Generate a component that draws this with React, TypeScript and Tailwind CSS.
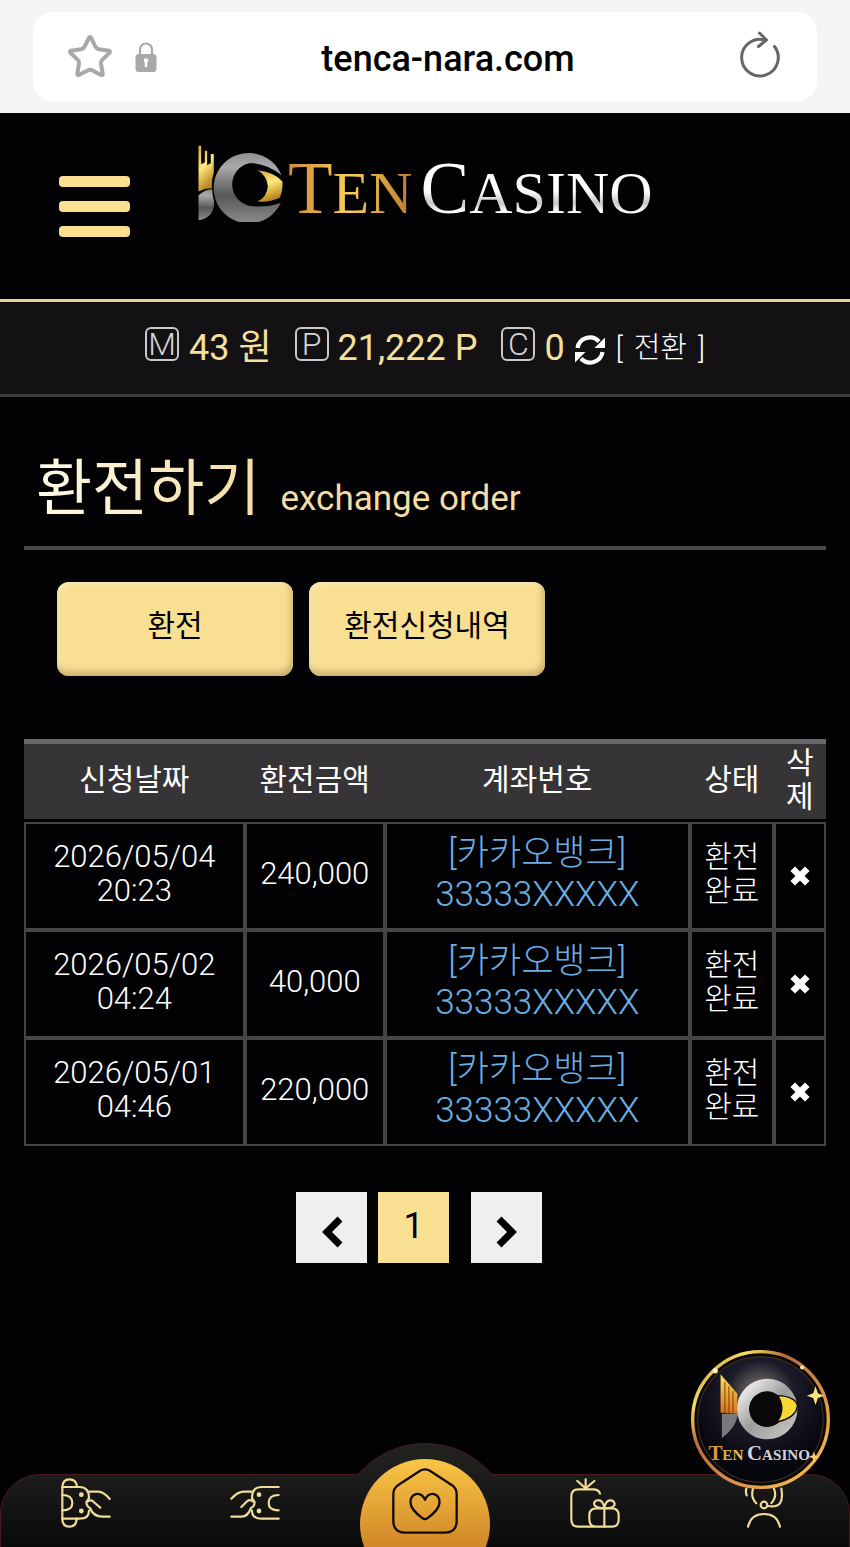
import { Star } from 'lucide-react';
import type { ReactNode } from 'react';

type Order = {
    date: string;
    time: string;
    amount: string;
    bank: string;
    account: string;
};

const orders: Order[] = [
    { date: '2026/05/04', time: '20:23', amount: '240,000', bank: '[카카오뱅크]', account: '33333XXXXX' },
    { date: '2026/05/02', time: '04:24', amount: '40,000', bank: '[카카오뱅크]', account: '33333XXXXX' },
    { date: '2026/05/01', time: '04:46', amount: '220,000', bank: '[카카오뱅크]', account: '33333XXXXX' },
];

const LockIcon = () => (
    <svg viewBox="0 0 22 30" className="h-[30px] w-[22px]" aria-hidden="true">
        <path d="M5 13V7.500a6 6 0 0 1 12 0v5.500" fill="none" stroke="#a8a8a8" strokeWidth="2.2" />
        <rect x="0.5" y="12" width="21" height="18" rx="3.5" fill="#a8a8a8" />
        <circle cx="11" cy="18.5" r="2.3" fill="#fff" />
        <path d="M11 19v6" stroke="#fff" strokeWidth="2.4" />
    </svg>
);

const ReloadIcon = () => (
    <svg viewBox="0 0 42 48" className="mb-[6px] h-12 w-[42px]" fill="none" stroke="#666" strokeWidth="3" strokeLinecap="round" strokeLinejoin="round" aria-hidden="true">
        <path d="M35.5 16.5A18.3 18.3 0 1 1 26 10" />
        <path d="M20.5 3l7 7-8 6.500" />
    </svg>
);

const RefreshIcon = () => (
    <svg viewBox="0 0 32 32" className="mt-1 h-8 w-8" aria-hidden="true">
        <g fill="none" stroke="#fff" strokeWidth="4.200">
            <path d="M3.500 14A12.500 12.500 0 0 1 25 7.500" />
            <path d="M28.500 18A12.500 12.500 0 0 1 7 24.500" />
        </g>
        <path d="M31 3.500V14H20.500Z" fill="#fff" />
        <path d="M1 28.500V18H11.500Z" fill="#fff" />
    </svg>
);

const LogoMark = () => (
    <svg viewBox="55 48 255 232" className="h-[77px] w-[85px]" aria-hidden="true">
        <defs>
            <linearGradient id="mark-gold" x1="0" y1="0" x2="0.3" y2="1">
                <stop offset="0" stopColor="#d9a93c" />
                <stop offset="0.5" stopColor="#ffe77a" />
                <stop offset="1" stopColor="#b98520" />
            </linearGradient>
            <linearGradient id="mark-gray" x1="0" y1="0" x2="0" y2="1">
                <stop offset="0" stopColor="#909093" />
                <stop offset="0.2" stopColor="#a9a9ab" />
                <stop offset="0.6" stopColor="#57575a" />
                <stop offset="1" stopColor="#8b8b8e" />
            </linearGradient>
        </defs>
        <path d="M56 50H64V106L75 100V65H82V109L93 102V75H102V130Q95 152 96 178Q75 178 56 188Z" fill="url(#mark-gold)" />
        <path d="M56 275V200Q72 182 97 181Q98 204 103 218Q104 248 86 263Q73 274 56 275Z" fill="url(#mark-gray)" />
        <path d="M306 139A106 106 0 1 0 304 222Q260 238 212 232A66 66 0 0 1 212 102Q262 104 306 139Z" fill="url(#mark-gray)" />
        <path d="M234 124Q285 130 309 158Q310 190 300 208Q265 222 234 218Q262 205 265 172Q262 140 234 124Z" fill="url(#mark-gold)" />
    </svg>
);

const Logo = () => (
    <a href="#" aria-label="Ten Casino" className="flex items-start">
        <LogoMark />
        <span className="mt-[6px] ml-[5px] flex items-baseline font-['Liberation_Serif',serif] text-[60px] leading-[76px] whitespace-nowrap text-transparent">
            <span className="bg-linear-to-r from-[#cf8b35] via-[#f7cf58] to-[#b8792c] bg-clip-text">
                <span className="text-[73px]">T</span>EN
            </span>
            <span className="ml-2 bg-linear-to-b from-white from-50% via-[#c8c8ca] via-65% to-white to-75% bg-clip-text">
                <span className="text-[73px]">C</span>ASINO
            </span>
        </span>
    </a>
);

const BoxedLetter = ({ children }: { children: ReactNode }) => (
    <span className="mb-2 flex h-[34px] w-[34px] items-center justify-center rounded-md border-2 border-[#c9c9c9] text-[32px] leading-none font-light text-[#d6d6d6]">
        {children}
    </span>
);

const Chevron = ({ d }: { d: string }) => (
    <svg viewBox="0 0 24 32" className="mt-2 h-8 w-6" fill="none" stroke="#000" strokeWidth="7" aria-hidden="true">
        <path d={d} />
    </svg>
);

const Floater = () => (
    <a href="#" aria-label="Ten Casino" className="absolute right-5 bottom-[58px] z-20">
        <svg viewBox="0 0 414 414" className="h-[139px] w-[139px]">
            <defs>
                <linearGradient id="ring" x1="0" y1="0" x2="1" y2="1">
                    <stop offset="0" stopColor="#b9662c" />
                    <stop offset="0.2" stopColor="#f5df62" />
                    <stop offset="0.35" stopColor="#b86b3c" />
                    <stop offset="0.6" stopColor="#d68b4d" />
                    <stop offset="0.85" stopColor="#f0b548" />
                    <stop offset="1" stopColor="#a85a26" />
                </linearGradient>
                <radialGradient id="night" cx="0.5" cy="0.3" r="0.6">
                    <stop offset="0" stopColor="#8a8478" />
                    <stop offset="0.45" stopColor="#1b1a28" />
                    <stop offset="1" stopColor="#06060d" />
                </radialGradient>
                <linearGradient id="steel" x1="0" y1="0" x2="1" y2="1">
                    <stop offset="0" stopColor="#f2f2f2" />
                    <stop offset="0.5" stopColor="#9d9d9d" />
                    <stop offset="1" stopColor="#c2c2be" />
                </linearGradient>
                <linearGradient id="flame" x1="0" y1="0" x2="0" y2="1">
                    <stop offset="0" stopColor="#ffe35a" />
                    <stop offset="1" stopColor="#d9701c" />
                </linearGradient>
                <linearGradient id="gold-word" x1="0" y1="0" x2="1" y2="0">
                    <stop offset="0" stopColor="#d98a35" />
                    <stop offset="1" stopColor="#f0cf4c" />
                </linearGradient>
            </defs>
            <circle cx="207" cy="207" r="202" fill="#0a0808" stroke="url(#ring)" strokeWidth="10" />
            <circle cx="207" cy="207" r="187" fill="url(#night)" stroke="#4a3023" strokeWidth="3" />
            <path d="M88 72L138 130V190L88 186Z" fill="url(#flame)" />
            <path d="M101 95V188M113 108V188M125 122V188" stroke="#7a3f12" strokeWidth="3" />
            <path d="M92 190H140Q134 232 92 262Z" fill="#77797a" />
            <circle cx="227" cy="176" r="71" fill="none" stroke="url(#steel)" strokeWidth="38" />
            <circle cx="226" cy="176" r="53" fill="#0b0908" />
            <path d="M258 136Q310 138 317 165Q314 202 256 214Q284 176 258 136Z" fill="#f8d839" stroke="#0b0908" strokeWidth="4" />
            <path d="M371 108l7 21 19 7-19 7-7 21-7-21-19-7 19-7Z" fill="#ffe27a" />
            <circle cx="72" cy="62" r="8" fill="#fff3b8" />
            <circle cx="331" cy="52" r="6" fill="#fff3b8" />
            <path d="M366 302l4 12 12 4-12 4-4 12-4-12-12-4 12-4Z" fill="#ffd070" />
            <g fontFamily="Liberation Serif, serif" fontWeight="700">
                <text x="52" y="327" fontSize="62" fill="url(#gold-word)">
                    T<tspan fontSize="45">EN</tspan>
                </text>
                <text x="167" y="327" fontSize="62" fill="#d4d4da">
                    C<tspan fontSize="45">ASINO</tspan>
                </text>
            </g>
        </svg>
    </a>
);

const NavIcon = ({ children }: { children: ReactNode }) => (
    <svg viewBox="0 0 150 150" className="h-[50px] w-[50px]" fill="none" stroke="#f0dc98" strokeWidth="6.500" strokeLinecap="round" strokeLinejoin="round" aria-hidden="true">
        {children}
    </svg>
);

const navItems = [
    {
        label: '입금',
        icon: (
            <NavIcon>
                <path d="M4 27V125Q5 146 25 146Q46 146 47 122M4 27Q5 4 25 4Q46 4 48 26" />
                <path d="M4 27H55Q84 27 84 60M4 122H55Q84 122 84 98M4 51Q34 51 34 75Q34 97 4 97" />
                <path d="M84 41H112Q128 41 146 63M84 60L76 72Q76 85 87 90Q97 116 125 116H146M78 72Q90 62 98 72L118 89" />
                <circle cx="61" cy="50" r="4" fill="#f0dc98" />
                <circle cx="61" cy="99" r="4" fill="#f0dc98" />
            </NavIcon>
        ),
    },
    {
        label: '출금',
        icon: (
            <NavIcon>
                <path d="M146 27H95Q66 27 66 60M146 122H95Q66 122 66 98M146 51Q116 51 116 75Q116 97 146 97" />
                <path d="M66 41H40Q24 41 4 62M66 60L74 72Q74 85 63 90Q53 116 35 116H4M72 72Q60 62 52 69L34 87" />
                <circle cx="87" cy="50" r="4" fill="#f0dc98" />
                <circle cx="87" cy="99" r="4" fill="#f0dc98" />
            </NavIcon>
        ),
    },
    { label: '홈', icon: null },
    {
        label: '이벤트',
        icon: (
            <NavIcon>
                <path d="M47 4V31M22 9L47 31L73 9M90 47Q86 34 70 34H25Q4 34 4 55V125Q4 146 25 146H125Q146 146 146 125V112Q146 91 125 91H80Q58 91 58 112V125Q58 146 80 146" />
                <path d="M103 91V146M103 91Q71 89 72 76Q75 65 88 67Q100 69 103 91Q106 69 119 67Q132 66 134 78Q134 91 103 91" />
            </NavIcon>
        ),
    },
    {
        label: '고객센터',
        icon: (
            <NavIcon>
                <path d="M22 32Q19 42 23 52M42 32Q34 58 52 76M105 32Q115 57 97 75M127 32Q132 62 124 74Q116 88 86 84" />
                <circle cx="75" cy="81" r="10" />
                <path d="M27 146Q36 108 75 108Q114 108 123 146" />
            </NavIcon>
        ),
    },
];

const BottomNav = () => (
    <footer className="relative h-[104px] overflow-hidden pt-[31px]">
        <nav className="grid h-[120px] grid-cols-5 rounded-t-[40px] border border-[#4a1c20] bg-linear-to-b from-[#1c1c1c] to-[#0a0a0a] to-60%">
            {navItems.map((item) =>
                item.icon ? (
                    <a key={item.label} href="#" aria-label={item.label} className="flex justify-center pt-[3px]">
                        {item.icon}
                    </a>
                ) : (
                    <span key={item.label} />
                ),
            )}
        </nav>
        {/* Raised home button, its arch shows only above the bar */}
        <div className="absolute inset-x-0 top-0 flex h-8 justify-center overflow-hidden">
            <div className="h-[176px] w-[176px] shrink-0 rounded-full border border-[#4a1c20] bg-linear-to-b from-[#222220] to-[#1c1c1c] to-20%" />
        </div>
        <div className="absolute inset-x-0 top-4 flex justify-center">
            <a href="#" aria-label="홈" className="flex h-[130px] w-[130px] justify-center rounded-full bg-linear-to-b from-[#f9c646] to-[#cf8526] to-70% pt-[9px]">
                <svg viewBox="0 0 200 200" className="h-[66px] w-[66px]" fill="none" stroke="#120a04" strokeWidth="7" strokeLinejoin="round" aria-hidden="true">
                    <path d="M84 9Q100-1 116 9L182 52Q196 62 196 80V160Q196 196 160 196H40Q4 196 4 160V80Q4 62 18 52Z" />
                    <path d="M100 96Q90 76 73 79Q55 84 56 105Q57 126 92 152Q100 158 108 152Q143 126 144 105Q145 84 127 79Q110 76 100 96Z" />
                </svg>
            </a>
        </div>
    </footer>
);

export default function App() {
    return (
        <div className="relative flex min-h-screen flex-col bg-[#020103] font-[Roboto,'Noto_Sans_CJK_KR',sans-serif] text-white">
            {/* Address bar */}
            <div className="bg-[#f5f5f5] px-[33px] py-3">
                <div className="flex h-[89px] items-center rounded-[20px] bg-white pr-9 pl-[33px]">
                    <button type="button" aria-label="즐겨찾기">
                        <Star className="h-12 w-12 text-[#a8a8a8]" strokeWidth={2} />
                    </button>
                    <span className="ml-[21px]">
                        <LockIcon />
                    </span>
                    <span className="flex-1 pt-1 text-center text-[36px] leading-none font-medium text-black">tenca-nara.com</span>
                    <button type="button" aria-label="새로고침">
                        <ReloadIcon />
                    </button>
                </div>
            </div>

            <header className="flex h-[189px] items-start border-b-[3px] border-[#e3d39a] pt-8">
                <button type="button" aria-label="메뉴" className="mt-[31px] ml-[59px] flex w-[71px] flex-col gap-[14px]">
                    <span className="h-[11px] rounded-sm bg-[#fbe08f]" />
                    <span className="h-[11px] rounded-sm bg-[#fbe08f]" />
                    <span className="h-[11px] rounded-sm bg-[#fbe08f]" />
                </button>
                <div className="ml-[68px]">
                    <Logo />
                </div>
            </header>

            {/* Balances */}
            <div className="flex h-[95px] items-center justify-center border-b-[3px] border-[#3c3a3d] bg-[#131113] text-[36px] leading-none text-[#f4e09c]">
                <BoxedLetter>M</BoxedLetter>
                <span className="mr-[23px] ml-[10px]">43 원</span>
                <BoxedLetter>P</BoxedLetter>
                <span className="mr-6 ml-[9px]">21,222 P</span>
                <BoxedLetter>C</BoxedLetter>
                <span className="mr-[9px] ml-[9px]">0</span>
                <button type="button" className="flex items-center gap-[10px] text-[29px] font-light text-white">
                    <RefreshIcon />
                    <span className="flex gap-[11px]">
                        <span>[</span>
                        <span>전환</span>
                        <span>]</span>
                    </span>
                </button>
            </div>

            <main className="flex-1 px-6 pt-[50px]">
                <h1 className="flex items-baseline gap-5 border-b-4 border-[#49474a] pb-[5px] pl-3 leading-[84px]">
                    <span className="bg-linear-to-r from-[#fffbe8] to-[#f5dca0] bg-clip-text text-[61px] text-transparent">환전하기</span>
                    <span className="text-[35px] text-[#f3dda3]">exchange order</span>
                </h1>

                <div className="mt-8 flex gap-4 pl-[33px] text-[30px] text-black">
                    <button type="button" className="h-[94px] w-[236px] rounded-xl bg-[#f9df92] pb-2 shadow-[inset_-2px_-4px_7px_#c4ab6d,inset_2px_2px_5px_#fff0c0]">
                        환전
                    </button>
                    <button type="button" className="h-[94px] w-[236px] rounded-xl bg-[#f9df92] pb-2 shadow-[inset_-2px_-4px_7px_#c4ab6d,inset_2px_2px_5px_#fff0c0]">
                        환전신청내역
                    </button>
                </div>

                <table className="mt-[63px] w-full table-fixed border-separate border-spacing-0 text-center text-[30px] leading-[34px]">
                    <colgroup>
                        <col className="w-[27.5%]" />
                        <col className="w-[17.5%]" />
                        <col className="w-[38%]" />
                        <col className="w-[10.500%]" />
                        <col />
                    </colgroup>
                    <thead>
                        <tr className="h-[83px]">
                            {['신청날짜', '환전금액', '계좌번호', '상태', '삭제'].map((name) => (
                                <th key={name} scope="col" className="border-t-[5px] border-b-[3px] border-t-[#69676a] border-b-[#020103] bg-[#363437] px-2 pb-1 font-normal break-all">
                                    {name}
                                </th>
                            ))}
                        </tr>
                    </thead>
                    <tbody className="font-light">
                        {orders.map((order) => (
                            <tr key={order.date} className="h-[108px]">
                                <td className="border-2 border-[#464447] pb-1 text-[31px]">
                                    {order.date}
                                    <br />
                                    {order.time}
                                </td>
                                <td className="border-2 border-[#464447] pb-1 text-[31px]">{order.amount}</td>
                                <td className="border-2 border-[#464447] pb-1 text-[35px] leading-[41px]">
                                    <a href="#" className="text-[#68b0e4]">
                                        {order.bank}
                                        <br />
                                        {order.account}
                                    </a>
                                </td>
                                <td className="border-2 border-[#464447] pb-1">
                                    환전
                                    <br />
                                    완료
                                </td>
                                <td className="border-2 border-[#464447]">
                                    <button type="button" aria-label="삭제" className="block w-full">
                                        <svg viewBox="0 0 20 20" className="mx-auto h-5 w-5" stroke="#fff" strokeWidth="6.500" strokeLinecap="square" aria-hidden="true">
                                            <path d="M5 5L15 15M15 5L5 15" />
                                        </svg>
                                    </button>
                                </td>
                            </tr>
                        ))}
                    </tbody>
                </table>

                <div className="mt-[46px] flex justify-center pr-3 text-[36px] text-black">
                    <button type="button" aria-label="이전" className="flex h-[71px] w-[71px] items-center justify-center bg-[#f0eef0]">
                        <Chevron d="M20 3L7 16L20 29" />
                    </button>
                    <button type="button" aria-current="page" className="mr-[22px] ml-[11px] h-[71px] w-[71px] bg-[#f9df92] pb-1">
                        1
                    </button>
                    <button type="button" aria-label="다음" className="flex h-[71px] w-[71px] items-center justify-center bg-[#f0eef0]">
                        <Chevron d="M4 3L17 16L4 29" />
                    </button>
                </div>
            </main>

            <Floater />
            <BottomNav />
        </div>
    );
}
